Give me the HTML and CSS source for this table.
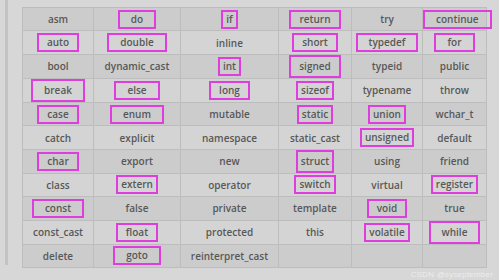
FILE: index.html
```html
<!DOCTYPE html>
<html>
<head>
<meta charset="utf-8">
<link rel="stylesheet" href="styles.css">
</head>
<body>
<div class="page">
  <div class="bar"></div>
  <div class="main">
    <table class="kw">
      <tr><td>asm</td><td><span class="m m-w">do</span></td><td><span class="m m-n">if</span></td><td><span class="m">return</span></td><td>try</td><td><span class="m m-w">continue</span></td></tr>
      <tr><td><span class="m">auto</span></td><td><span class="m m-w">double</span></td><td>inline</td><td><span class="m">short</span></td><td><span class="m m-w">typedef</span></td><td><span class="m m-w">for</span></td></tr>
      <tr><td>bool</td><td>dynamic_cast</td><td><span class="m m-n">int</span></td><td><span class="m m-t">signed</span></td><td>typeid</td><td>public</td></tr>
      <tr><td><span class="m m-w m-t">break</span></td><td><span class="m m-w">else</span></td><td><span class="m">long</span></td><td><span class="m m-n">sizeof</span></td><td>typename</td><td>throw</td></tr>
      <tr><td><span class="m">case</span></td><td><span class="m m-w">enum</span></td><td>mutable</td><td><span class="m m-n">static</span></td><td><span class="m m-n">union</span></td><td>wchar_t</td></tr>
      <tr><td>catch</td><td>explicit</td><td>namespace</td><td>static_cast</td><td><span class="m m-n">unsigned</span></td><td>default</td></tr>
      <tr><td><span class="m">char</span></td><td>export</td><td>new</td><td><span class="m m-n m-t">struct</span></td><td>using</td><td>friend</td></tr>
      <tr><td>class</td><td><span class="m m-n">extern</span></td><td>operator</td><td><span class="m m-n">switch</span></td><td>virtual</td><td><span class="m m-n">register</span></td></tr>
      <tr><td><span class="m m-w">const</span></td><td>false</td><td>private</td><td>template</td><td><span class="m">void</span></td><td>true</td></tr>
      <tr><td>const_cast</td><td><span class="m">float</span></td><td>protected</td><td>this</td><td><span class="m m-n">volatile</span></td><td><span class="m m-w m-t">while</span></td></tr>
      <tr><td>delete</td><td><span class="m m-w">goto</span></td><td>reinterpret_cast</td><td></td><td></td><td></td></tr>
    </table>
    <div class="mark">CSDN @syseptember</div>
  </div>
</div>
</body>
</html>
```

FILE: styles.css
```css
* { box-sizing: border-box; }
html, body { margin: 0; padding: 0; }
body {
  background: #d7d7d7;
  font-family: "Open Sans", "Liberation Sans", sans-serif;
  width: 499px;
  height: 280px;
  overflow: hidden;
}
.page {
  display: flex;
  align-items: flex-start;
  height: 280px;
}
.bar {
  width: 3px;
  height: 265px;
  margin-left: 5px;
  background: #c3c3c3;
  flex: none;
}
.main {
  margin-left: 14px;
  padding-top: 7px;
  display: flex;
  flex-direction: column;
}
.kw {
  border-collapse: collapse;
  table-layout: fixed;
  width: 464px;
}
.kw td {
  border: 1px solid #bdbdbd;
  height: 23.45px;
  padding: 0;
  text-align: center;
  vertical-align: middle;
  font-size: 10px;
  font-weight: 600;
  color: #585858;
  white-space: nowrap;
}
.kw td:nth-child(1) { width: 71px; }
.kw td:nth-child(2) { width: 87px; }
.kw td:nth-child(3) { width: 98px; }
.kw td:nth-child(4) { width: 73px; }
.kw td:nth-child(5) { width: 71px; }
.kw td:nth-child(6) { width: 64px; }
.kw tr:nth-child(odd) td { background: #cccccc; }
.kw tr:nth-child(even) td { background: #d4d4d4; }
.m {
  display: inline-block;
  border: 2px solid #dd3edd;
  padding: 1px 8px;
  line-height: 13px;
}
.m-w { padding-left: 11px; padding-right: 11px; }
.m-n { padding-left: 3px; padding-right: 3px; }
.m-t { padding-top: 3px; padding-bottom: 3px; }
.mark {
  align-self: flex-end;
  margin-right: -6px;
  margin-top: 2px;
  font-family: "Liberation Sans", sans-serif;
  font-size: 8px;
  color: #ececec;
  letter-spacing: 0.2px;
}
```
